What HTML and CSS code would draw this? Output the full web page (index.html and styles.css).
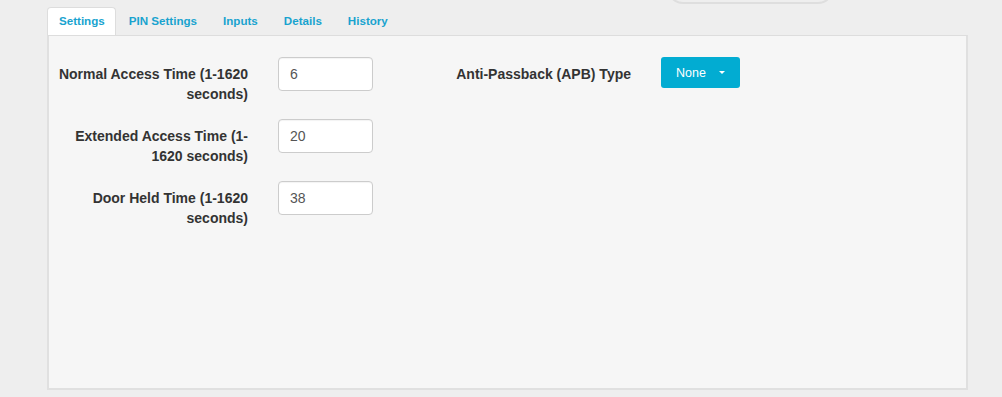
FILE: index.html
```html
<!DOCTYPE html>
<html lang="en">

<head>
  <meta charset="UTF-8" />
  <title>Door Settings</title>
  <link rel="stylesheet" href="styles.css">
</head>

<body>
  <div class="search-pill"></div>

  <div class="page">
    <ul class="tabs">
      <li class="tab active">Settings</li>
      <li class="tab">PIN Settings</li>
      <li class="tab">Inputs</li>
      <li class="tab">Details</li>
      <li class="tab">History</li>
    </ul>

    <div class="panel">
      <div class="form-col">
        <div class="row">
          <label class="field-label">Normal Access Time (1-1620 seconds)</label>
          <input class="field" type="text" value="6" />
        </div>
        <div class="row">
          <label class="field-label">Extended Access Time (1-1620 seconds)</label>
          <input class="field" type="text" value="20" />
        </div>
        <div class="row">
          <label class="field-label">Door Held Time (1-1620 seconds)</label>
          <input class="field" type="text" value="38" />
        </div>
      </div>

      <div class="form-col side">
        <div class="row">
          <label class="field-label">Anti-Passback (APB) Type</label>
          <button class="dropdown">None <span class="caret"></span></button>
        </div>
      </div>
    </div>
  </div>
</body>

</html>
```

FILE: styles.css
```css
html,
body {
  margin: 0;
  height: 100%;
  background: #eeeeee;
  font-family: 'Liberation Sans', Arial, sans-serif;
  overflow: hidden;
}

.search-pill {
  position: absolute;
  top: -30px;
  left: 667px;
  width: 167px;
  height: 34px;
  box-sizing: border-box;
  border: 2px solid #dedede;
  border-radius: 16px;
}

.page {
  padding: 7px 0 0 47px;
  width: 921px;
}

.tabs {
  list-style: none;
  margin: 0;
  padding: 0;
  display: flex;
  position: relative;
  z-index: 1;
}

.tab {
  padding: 0 12px;
  height: 27px;
  line-height: 26px;
  font-size: 11.6px;
  font-weight: bold;
  color: #19a3cf;
  border: 1px solid transparent;
  border-bottom: none;
  border-radius: 4px 4px 0 0;
}

.tab.active {
  background: #ffffff;
  border-color: #dddddd;
  padding: 0 10px 0 11px;
}

.panel {
  display: flex;
  background: #f6f6f6;
  border: 2px solid #e0e0e0;
  border-top: 1px solid #dddddd;
  height: 355px;
  box-sizing: border-box;
  padding: 21px 0 0 3px;
}

.form-col {
  display: flex;
  flex-direction: column;
  gap: 28px;
}

.form-col.side {
  margin-left: 62px;
}

.row {
  display: flex;
  align-items: flex-start;
  gap: 30px;
  height: 34px;
}

.field-label {
  width: 196px;
  padding-top: 7px;
  text-align: right;
  font-size: 14px;
  font-weight: bold;
  line-height: 20px;
  color: #333333;
}

.field {
  width: 95px;
  height: 34px;
  box-sizing: border-box;
  margin: 0;
  padding: 0 11px;
  font-family: inherit;
  font-size: 14px;
  color: #555555;
  background: #ffffff;
  border: 1px solid #cccccc;
  border-radius: 4px;
  box-shadow: inset 0 1px 1px rgba(0, 0, 0, 0.05);
}

.dropdown {
  display: flex;
  align-items: center;
  height: 31px;
  margin: 0;
  padding: 0 15px;
  font-family: inherit;
  font-size: 12.5px;
  color: #ffffff;
  background: #02acd2;
  border: none;
  border-radius: 3px;
}

.caret {
  margin-left: 13px;
  width: 0;
  height: 0;
  border-left: 3px solid transparent;
  border-right: 3px solid transparent;
  border-top: 3px solid #ffffff;
}
```
